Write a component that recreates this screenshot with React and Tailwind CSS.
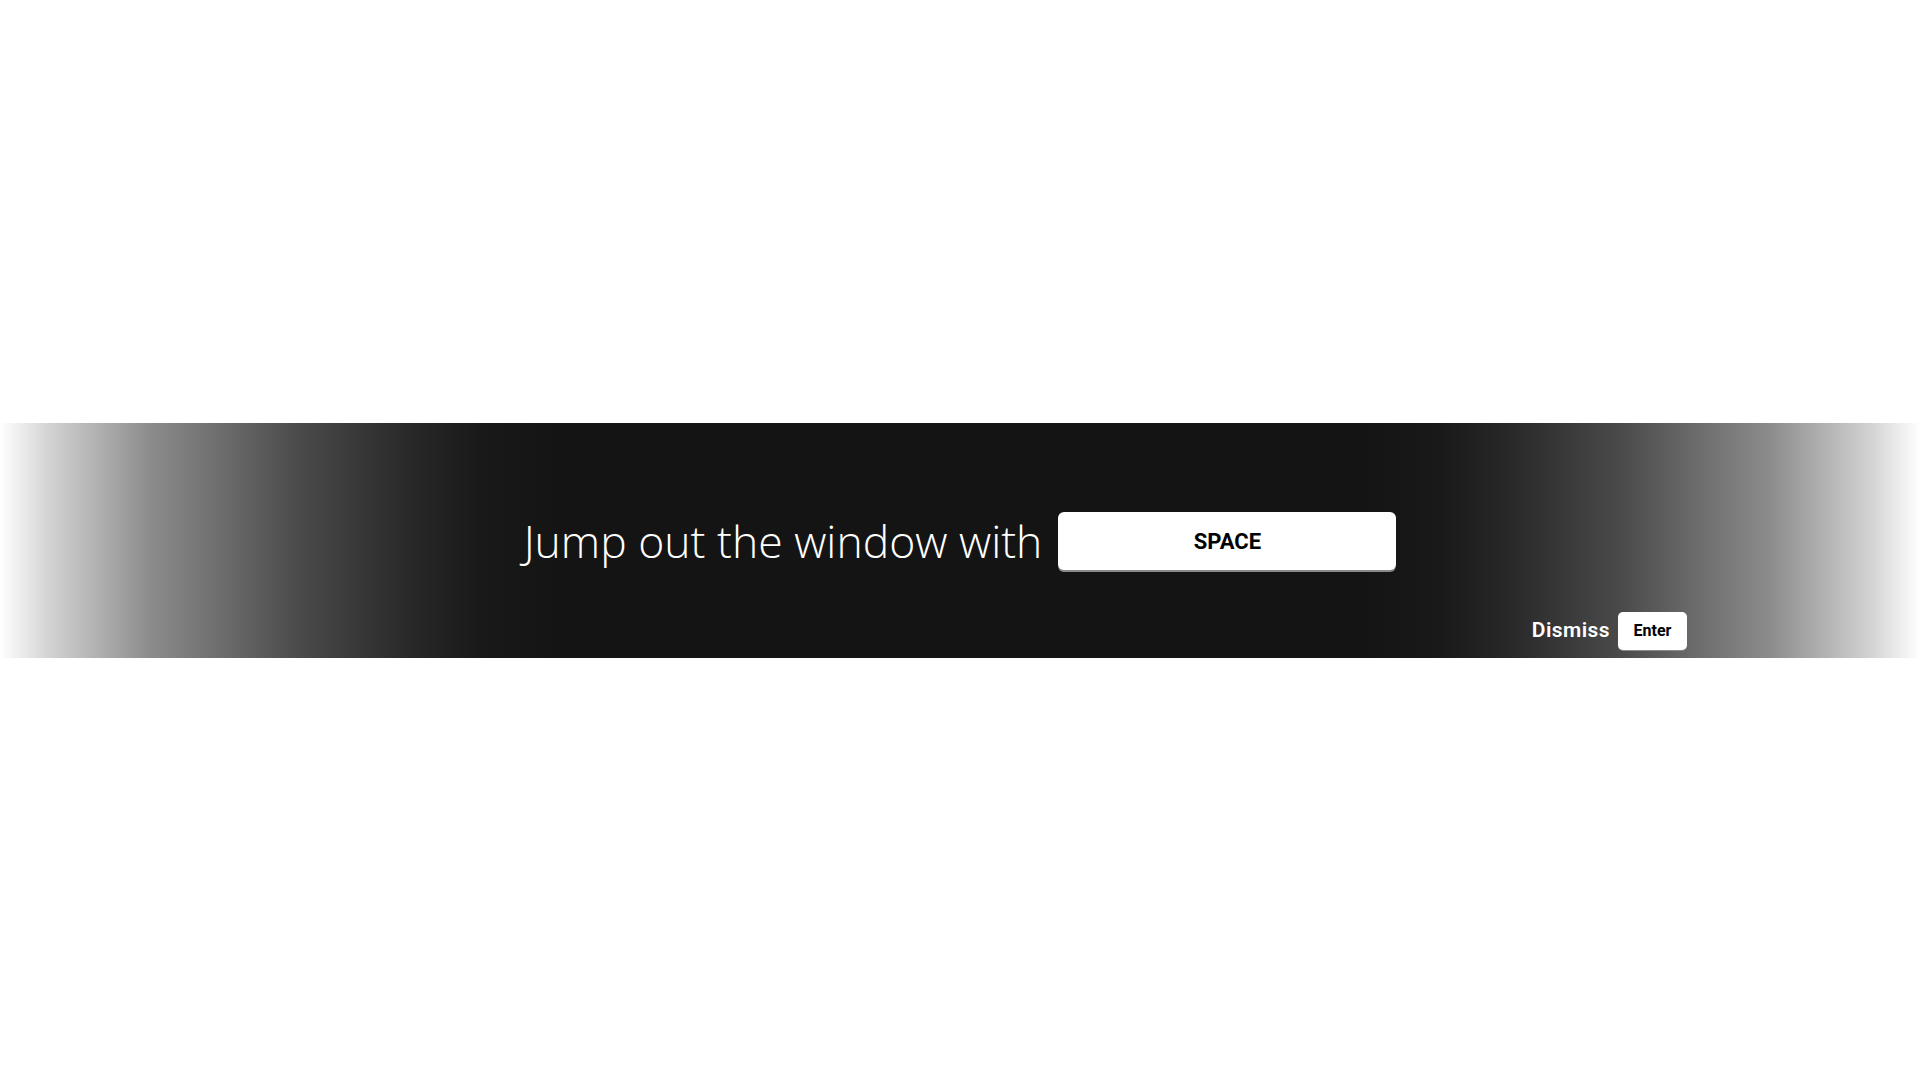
const Key = ({ label, className }) => (
    <div
        className={`flex items-center justify-center bg-white text-black font-['Roboto',sans-serif] font-bold ${className}`}
    >
        {label}
    </div>
);

export default function App() {
    return (
        <div className="min-h-screen flex items-center bg-white">
            {/* banner */}
            <div className="w-full h-[235px] flex flex-col pt-[89px] pb-2 bg-[linear-gradient(to_right,#ffffff_0%,#d2d2d2_2.6%,#8c8c8c_7.8%,#4a4a4a_15.6%,#282828_21.4%,#191919_25%,#141414_29%,#141414_71%,#191919_75%,#282828_78.6%,#4a4a4a_84.4%,#8c8c8c_92.2%,#d2d2d2_97.4%,#ffffff_100%)]">
                <div className="flex justify-center items-center gap-4 h-[58px]">
                    <h1 className="font-['Open_Sans',sans-serif] font-light text-[44.5px] leading-none text-white whitespace-nowrap">
                        Jump out the window with
                    </h1>
                    <Key
                        label="SPACE"
                        className="w-[338px] h-[58px] rounded-md text-[22px] font-stretch-[94%] shadow-[0_2px_0_#8a8a8a]"
                    />
                </div>
                <div className="flex justify-end items-center gap-2 mt-[42px] h-[38px] pr-[233px]">
                    <span className="font-['Roboto',sans-serif] font-semibold text-[21px] tracking-[0.02em] text-white">
                        Dismiss
                    </span>
                    <Key
                        label="Enter"
                        className="w-[69px] h-[38px] rounded-[5px] text-[16px] font-stretch-[92%] shadow-[0_1px_0_#8a8a8a]"
                    />
                </div>
            </div>
        </div>
    );
}
